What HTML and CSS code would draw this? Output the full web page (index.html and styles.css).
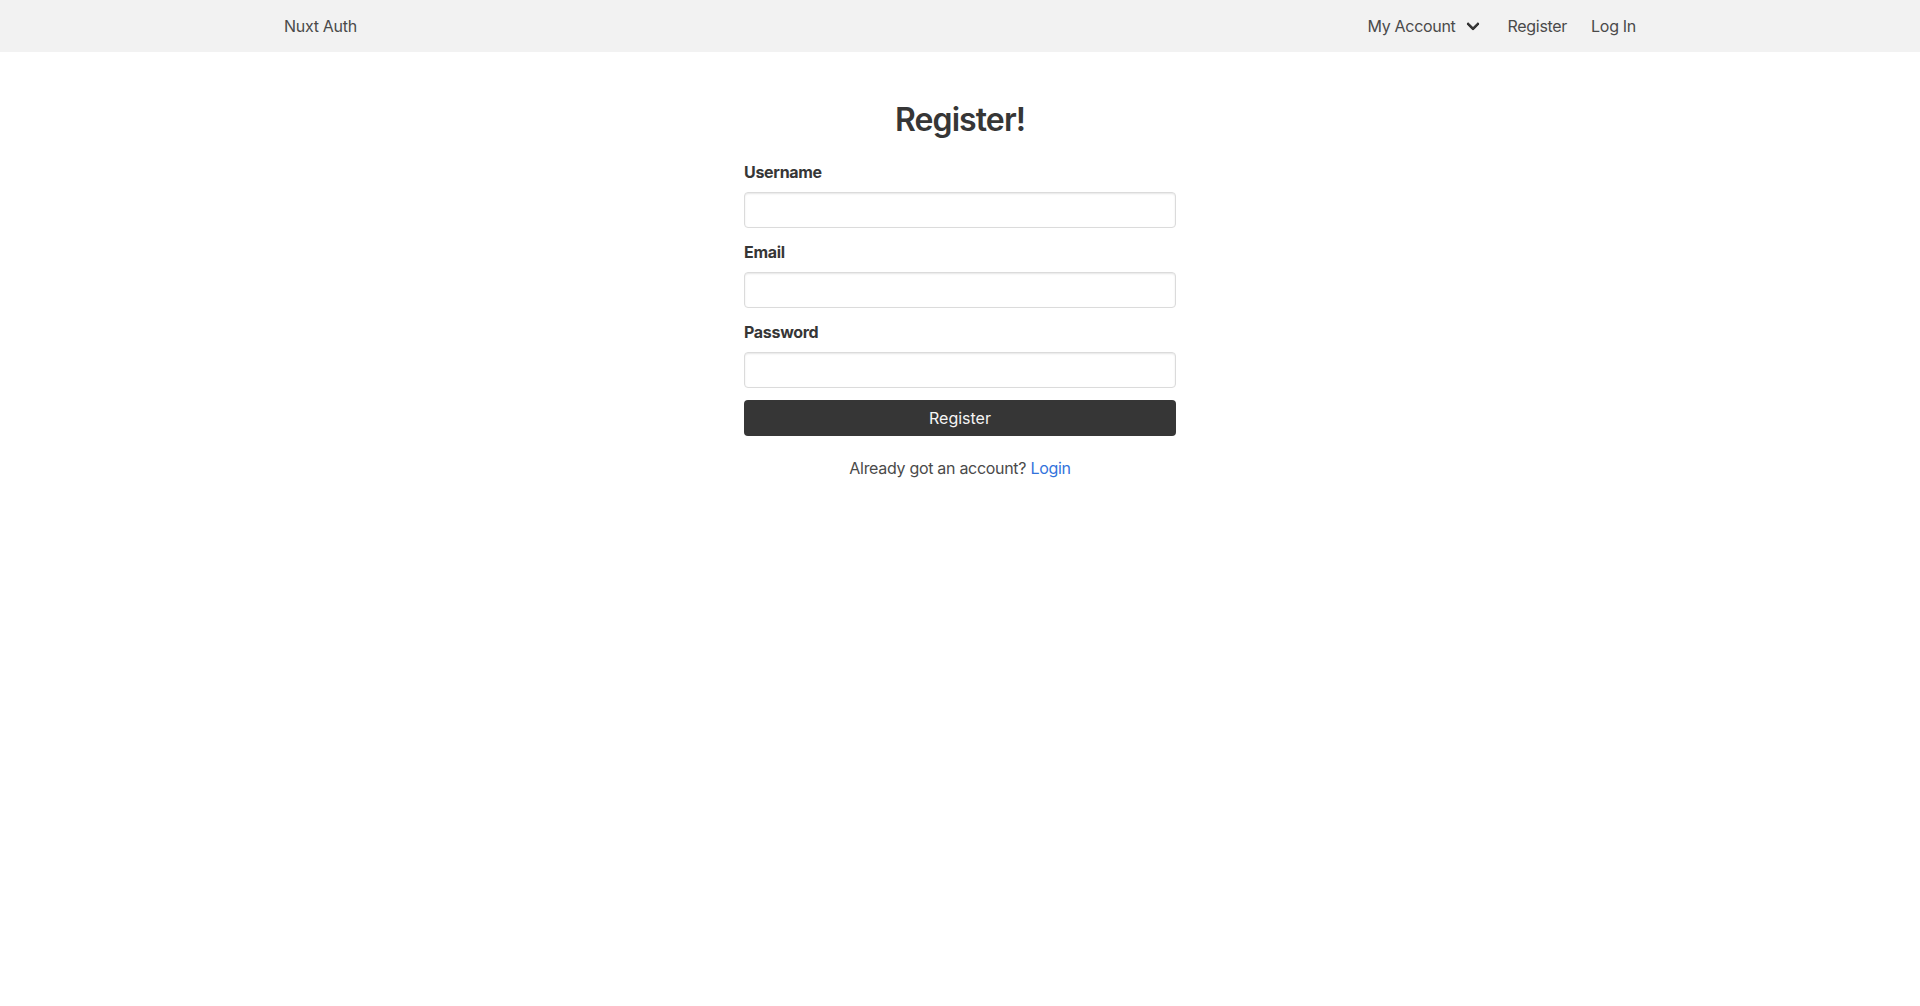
FILE: index.html
```html
<!DOCTYPE html>
<html lang="en">
<head>
    <meta charset="UTF-8">
    <meta name="viewport" content="width=device-width, initial-scale=1.0">
    <title>Nuxt Auth</title>
    <link rel="stylesheet" href="styles.css">
</head>
<body>
    <nav class="navbar">
        <div class="navbar-inner">
            <div class="navbar-brand">
                <a class="navbar-item" href="#">Nuxt Auth</a>
            </div>
            <div class="navbar-end">
                <a class="navbar-item navbar-link" href="#">My Account <span class="arrow"></span></a>
                <a class="navbar-item" href="#">Register</a>
                <a class="navbar-item" href="#">Log In</a>
            </div>
        </div>
    </nav>

    <section class="section">
        <div class="column">
            <h2 class="title">Register!</h2>
            <form>
                <div class="field">
                    <label class="label" for="username">Username</label>
                    <input class="input" type="text" id="username" name="username">
                </div>
                <div class="field">
                    <label class="label" for="email">Email</label>
                    <input class="input" type="email" id="email" name="email">
                </div>
                <div class="field">
                    <label class="label" for="password">Password</label>
                    <input class="input" type="password" id="password" name="password">
                </div>
                <div class="field">
                    <button class="button" type="button">Register</button>
                </div>
            </form>
            <p class="switch">Already got an account? <a href="#">Login</a></p>
        </div>
    </section>
</body>
</html>
```

FILE: styles.css
```css
body {
    margin: 0;
    font-family: Inter, "Noto Sans", sans-serif;
    font-size: 16px;
    line-height: 1.5;
    letter-spacing: -0.3px;
    color: #4a4a4a;
    background: white;
}

a {
    color: #3273dc;
    text-decoration: none;
}

.navbar {
    background-color: #f2f2f2;
    height: 52px;
}

.navbar-inner {
    max-width: 1352px;
    height: 100%;
    margin: 0 auto;
    display: flex;
    align-items: stretch;
}

.navbar-brand,
.navbar-end {
    display: flex;
    align-items: stretch;
}

.navbar-brand {
    margin-left: -12px;
}

.navbar-end {
    margin-left: auto;
    margin-right: -12px;
}

.navbar-item {
    display: flex;
    align-items: center;
    padding: 8px 12px;
    color: #4a4a4a;
}

.navbar-link {
    padding-right: 18px;
}

.arrow {
    display: inline-block;
    width: 10px;
    height: 10px;
    box-sizing: border-box;
    margin-left: 12px;
    border: 3px solid #363636;
    border-top: 0;
    border-right: 0;
    border-radius: 2px;
    transform: translateY(-2px) rotate(-45deg);
}

.section {
    padding: 48px 24px;
}

.column {
    width: 432px;
    margin: 0 auto;
}

.title {
    margin: 2px 0 22px;
    font-size: 32px;
    font-weight: 600;
    line-height: 1.125;
    letter-spacing: -0.9px;
    color: #363636;
    text-align: center;
}

.field {
    margin-bottom: 12px;
}

.label {
    display: block;
    margin-bottom: 8px;
    font-weight: 700;
    color: #363636;
}

.input {
    display: block;
    box-sizing: border-box;
    width: 100%;
    height: 36px;
    padding: 5px 11px;
    font: inherit;
    color: #363636;
    background: white;
    border: 1px solid #dbdbdb;
    border-radius: 4px;
    box-shadow: inset 0 1px 2px rgba(10, 10, 10, 0.1);
}

.button {
    display: block;
    box-sizing: border-box;
    width: 100%;
    height: 36px;
    font: inherit;
    color: #f5f5f5;
    background-color: #363636;
    border: 1px solid transparent;
    border-radius: 4px;
}

.switch {
    margin: 20px 0 0;
    text-align: center;
}
```
